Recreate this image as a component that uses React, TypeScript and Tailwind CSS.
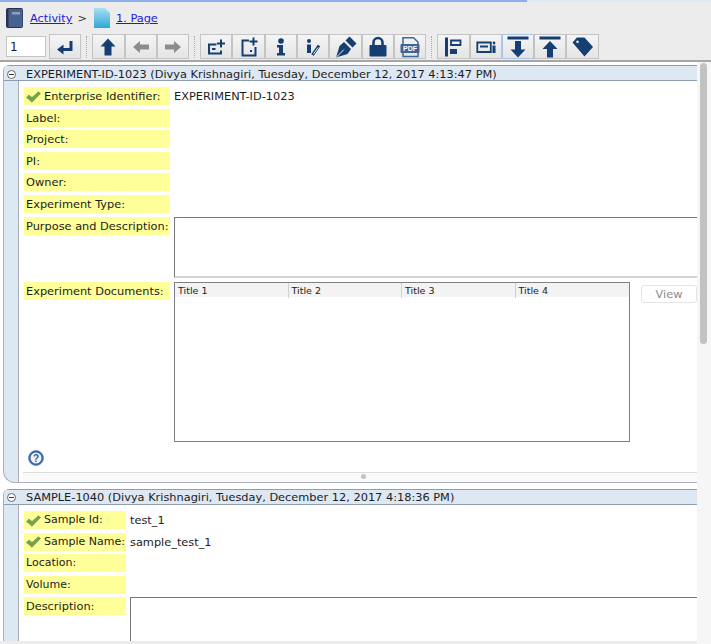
import type { ReactNode } from "react";

const NAVY = "#153f73";
const GREY = "#8c8c8c";

// every icon is drawn 1:1 in a 24px box
const icons: Record<string, ReactNode> = {
  enter: (
    <>
      <path d="M18 6v8.500H9" fill="none" stroke={NAVY} strokeWidth="3" />
      <path d="M10.500 9.500 4 14.500l6.500 5z" fill={NAVY} />
    </>
  ),
  up: <path d="M12 3.500 19.500 11.500H15.500V20.500H8.500V11.500H4.500z" fill={NAVY} />,
  left: <path d="M4 12 11 6v3.500h9v5h-9v3.500z" fill={GREY} />,
  right: <path d="M20 12 13 6v3.500H4v5h9v3.500z" fill={GREY} />,
  addField: (
    <>
      <path d="M12.500 9.500H5v9h12v-3" fill="none" stroke={NAVY} strokeWidth="2" />
      <path d="M8 14h3.500M17 4.500v8M13 8.500h8" fill="none" stroke={NAVY} strokeWidth="2" />
    </>
  ),
  addPage: (
    <>
      <path d="M12 5.500H5.500v15h13V12" fill="none" stroke={NAVY} strokeWidth="2" />
      <path d="M13 15h2v2h-2z" fill={NAVY} />
      <path d="M16.500 2.500v8M12.500 6.500h8" fill="none" stroke={NAVY} strokeWidth="2" />
    </>
  ),
  info: (
    <>
      <circle cx="12" cy="6" r="2.800" fill={NAVY} />
      <path d="M8 10h6v8h2v2.500H8V18h2v-5.500H8z" fill={NAVY} />
    </>
  ),
  sign: (
    <>
      <circle cx="8" cy="6" r="2" fill={NAVY} />
      <path d="M6 9.500h4v8.500H6z" fill={NAVY} />
      <path d="M11.500 20 18 10.500" fill="none" stroke={NAVY} strokeWidth="3" />
      <path d="M12.500 19 17 12.500" fill="none" stroke="#e8e8e8" strokeWidth="1" />
    </>
  ),
  pen: (
    <>
      <path d="M15.500 1.500 22.500 8.500 18.500 12.500 11.500 5.500z" fill={NAVY} />
      <path d="M10 7 17 14 13.500 19 2 22.500 5.500 11z" fill={NAVY} />
      <path d="M2.500 22 10 14.500" stroke="#e8e8e8" strokeWidth="1" />
    </>
  ),
  lock: (
    <>
      <path d="M7.500 11V7.500a4.500 4.500 0 0 1 9 0V11" fill="none" stroke={NAVY} strokeWidth="2.600" />
      <rect x="3.500" y="10" width="17" height="11.500" rx="1" fill={NAVY} />
    </>
  ),
  pdf: (
    <>
      <path d="M5 9V2.700h10.500L20 7v2M5 18v3.500h15V18" fill="none" stroke="#3f6596" strokeWidth="1.500" />
      <rect x="2.500" y="9" width="19" height="9" rx="1" fill="#3f6596" />
      <text x="12" y="16.200" textAnchor="middle" fontSize="7" fontWeight="700" fill="#fff" fontFamily="'Liberation Sans', sans-serif">
        PDF
      </text>
    </>
  ),
  align: (
    <>
      <rect x="4" y="2.500" width="3" height="19" fill={NAVY} />
      <path d="M10 5.500h9.500v4.500H10z" fill="none" stroke={NAVY} strokeWidth="1.800" />
      <rect x="9" y="14" width="7" height="5" fill={NAVY} />
    </>
  ),
  fieldInfo: (
    <>
      <path d="M3.300 7.500h13.500v9.500H3.300z" fill="none" stroke={NAVY} strokeWidth="1.800" />
      <path d="M6 10.500h8v2H6z" fill={NAVY} />
      <circle cx="20" cy="8" r="1.400" fill={NAVY} />
      <path d="M18.500 10.500h3V18h-3z" fill={NAVY} />
    </>
  ),
  down: (
    <>
      <rect x="1.500" y="1.500" width="21" height="3" fill={NAVY} />
      <path d="M12 22.500 4.500 14.500H9V6h6v8.500h4.500z" fill={NAVY} />
    </>
  ),
  top: (
    <>
      <rect x="1.500" y="1.500" width="21" height="3" fill={NAVY} />
      <path d="M12 6 19.500 14H15V22.500H9V14H4.500z" fill={NAVY} />
    </>
  ),
  tag: (
    <path
      fillRule="evenodd"
      d="M1.500 7.500 6 2.500h7.500L22 12 13.500 21.500zM6.500 5.500a1.300 1.300 0 1 0 .01 0z"
      fill={NAVY}
    />
  ),
};

const ToolButton = ({ name, focused }: { name: string; focused?: boolean }) => (
  <button
    className={`w-[32.300px] h-[25px] flex items-center justify-center border bg-gradient-to-b from-[#f5f5f5] to-[#e4e4e4] ${
      focused ? "border-[#a9c4e4]" : "border-[#c4c4c4]"
    }`}
  >
    <svg width="24" height="24" viewBox="0 0 24 24" className="shrink-0">
      {icons[name]}
    </svg>
  </button>
);

const Dots = () => <div className="w-[1px] h-[22px] mx-[5px] border-l border-dotted border-[#a8a8a8]" />;

const Group = ({ children }: { children: ReactNode }) => <div className="flex">{children}</div>;

const Check = () => (
  <svg width="15" height="12" viewBox="0 0 15 12" className="shrink-0">
    <path d="M.5 6.500 3 4 6 6.500 12.500.8 14.500 2.500 6 11.300z" fill="#74a24e" stroke="#5b8740" strokeWidth=".5" />
  </svg>
);

const Field = ({
  label,
  check,
  value,
  width,
}: {
  label: string;
  check?: boolean;
  value?: string;
  width: string;
}) => (
  <div className="flex h-[18px] items-center">
    <div className={`${width} h-full bg-[#ffff99] flex items-center pl-[2px] pt-[1px] shrink-0 whitespace-nowrap`}>
      {check && (
        <span className="mr-[3px] flex">
          <Check />
        </span>
      )}
      {label}
    </div>
    {value && <div className="pl-[4px] pt-[1px]">{value}</div>}
  </div>
);

const PanelHeader = ({ title, offset }: { title: string; offset: string }) => (
  <div className={`h-[16px] flex items-center bg-[#dee8f3] border-y border-[#8f9db0] leading-none shrink-0 ${offset}`}>
    <div className="w-[9px] h-[9px] ml-[3px] mr-[10px] rounded-full border border-[#666] bg-white flex items-center justify-center shrink-0">
      <div className="w-[5px] h-[1px] bg-[#333]" />
    </div>
    <span className="whitespace-nowrap">{title}</span>
  </div>
);

const App = () => {
  return (
    <div className="w-[711px] h-[644px] overflow-hidden bg-[#ececec] flex flex-col text-[11.350px] text-[#1c1c1c] font-['DejaVu_Sans',sans-serif]">
      {/* progress line */}
      <div className="h-[2px] flex shrink-0 bg-[#dfe8f6]">
        <div className="w-[527px] bg-[#8cb0ea]" />
      </div>

      {/* breadcrumb */}
      <div className="h-[26px] mt-[3px] pl-[6px] flex items-center shrink-0">
        <svg width="17" height="20" viewBox="0 0 17 20">
          <rect width="17" height="20" rx="2" fill="#26324f" />
          <rect x="2.500" y="1" width="14" height="18" fill="#47628c" />
          <rect x="6" y="4" width="8" height="2.500" fill="#8fa2bd" />
        </svg>
        <span className="ml-[7px] pt-[1px] text-[#1a1ae0] underline">Activity</span>
        <span className="ml-[5px] pt-[1px] text-[#333]">&gt;</span>
        <svg width="16" height="20" viewBox="0 0 16 20" className="ml-[7px]">
          <defs>
            <linearGradient id="pageFill" x1="0" y1="0" x2="0" y2="1">
              <stop offset="0" stopColor="#a9e0f2" />
              <stop offset="1" stopColor="#2fa6d6" />
            </linearGradient>
          </defs>
          <path d="M0 0h11l5 5v15H0z" fill="url(#pageFill)" />
        </svg>
        <span className="ml-[6px] pt-[1px] text-[#1a1ae0] underline">1. Page</span>
      </div>

      {/* toolbar */}
      <div className="h-[25px] mt-[3px] ml-[6px] flex items-center shrink-0">
        <div className="w-[40px] h-[21px] bg-white border border-[#c4c4c4] flex items-center pl-[3px] mr-[3px] text-[12px]">1</div>
        <ToolButton name="enter" />
        <Dots />
        <Group>
          <ToolButton name="up" />
          <ToolButton name="left" />
          <ToolButton name="right" />
        </Group>
        <Dots />
        <Group>
          <ToolButton name="addField" />
          <ToolButton name="addPage" />
          <ToolButton name="info" />
          <ToolButton name="sign" />
          <ToolButton name="pen" />
          <ToolButton name="lock" />
          <ToolButton name="pdf" />
        </Group>
        <Dots />
        <Group>
          <ToolButton name="align" />
          <ToolButton name="fieldInfo" />
          <ToolButton name="down" focused />
          <ToolButton name="top" />
          <ToolButton name="tag" />
        </Group>
      </div>

      {/* scrolling page */}
      <div className="mt-[1px] flex-1 min-h-0 border-t-2 border-[#a6a6a6] bg-white flex overflow-hidden">
        <div className="w-[697px] pt-[3px] pl-[3px] flex flex-col">
          {/* experiment panel */}
          <section className="h-[418px] bg-[#dee8f3] border-l border-b border-[#a9b0b9] rounded-bl-[12px] rounded-tl-[6px] flex flex-col shrink-0 overflow-hidden">
            <PanelHeader offset="pt-[3px]" title="EXPERIMENT-ID-1023 (Divya Krishnagiri, Tuesday, December 12, 2017 4:13:47 PM)" />
            <div className="flex-1 ml-[14px] bg-white border-l border-[#a9b0b9] pl-[5px] pt-[6px] flex flex-col">
              <div className="flex flex-col gap-[3.600px]">
                <Field width="w-[146px]" label="Enterprise Identifier:" check value="EXPERIMENT-ID-1023" />
                <Field width="w-[146px]" label="Label:" />
                <Field width="w-[146px]" label="Project:" />
                <Field width="w-[146px]" label="PI:" />
                <Field width="w-[146px]" label="Owner:" />
                <Field width="w-[146px]" label="Experiment Type:" />
                <div className="flex h-[61px]">
                  <div className="w-[146px] h-[18px] bg-[#ffff99] flex items-center pl-[2px] pt-[1px] shrink-0 whitespace-nowrap">Purpose and Description:</div>
                  <div className="ml-[4px] flex-1 border-t border-l border-[#777] border-b-2 border-b-[#d2d2d2]" />
                </div>
              </div>
              <div className="flex mt-[4.500px]">
                <div className="w-[146px] h-[18px] bg-[#ffff99] flex items-center pl-[2px] shrink-0 whitespace-nowrap">Experiment Documents:</div>
                <div className="ml-[4px] w-[456px] h-[160px] border border-[#808080]">
                  <div className="h-[14px] bg-[#f3f3f3] grid grid-cols-4 text-[9.500px]">
                    {["Title 1", "Title 2", "Title 3", "Title 4"].map((title) => (
                      <div key={title} className="pl-[3px] pt-[1px] border-r border-[#d0d0d0] last:border-r-0 flex items-center">
                        {title}
                      </div>
                    ))}
                  </div>
                </div>
                <button className="ml-[11px] mt-[3px] w-[56px] h-[18px] bg-white border border-[#e4e4e4] rounded-[3px] text-[#8a8a8a]">View</button>
              </div>
              <div className="mt-[8px] ml-[4px]">
                <svg width="16" height="16" viewBox="0 0 16 16" className="block">
                  <circle cx="8" cy="8" r="7.500" fill="#2e5fa5" stroke="#7f97bd" />
                  <circle cx="8" cy="8" r="5.500" fill="#f0f4fa" />
                  <text x="8" y="11.500" textAnchor="middle" fontSize="10" fontWeight="700" fill="#2e5fa5" fontFamily="'Liberation Sans', sans-serif">
                    ?
                  </text>
                </svg>
              </div>
              <div className="mt-[6px] -ml-[1px] flex-1 border-t border-[#dcdcdc] bg-[#fafafa] flex justify-center pl-[7px]">
                <div className="w-[5px] h-[5px] mt-[1px] rounded-full bg-[#c4c4c4]" />
              </div>
            </div>
          </section>

          {/* sample panel */}
          <section className="mt-[6px] flex-1 min-h-0 bg-[#dee8f3] border-l border-[#a9b0b9] rounded-tl-[6px] flex flex-col overflow-hidden">
            <PanelHeader offset="pt-[1px]" title="SAMPLE-1040 (Divya Krishnagiri, Tuesday, December 12, 2017 4:18:36 PM)" />
            <div className="flex-1 ml-[14px] bg-white border-l border-[#a9b0b9] pl-[5px] pt-[6px]">
              <div className="flex flex-col gap-[3.500px]">
                <Field width="w-[102px] text-[11px]" label="Sample Id:" check value="test_1" />
                <Field width="w-[102px] text-[11px]" label="Sample Name:" check value="sample_test_1" />
                <Field width="w-[102px] text-[11px]" label="Location:" />
                <Field width="w-[102px] text-[11px]" label="Volume:" />
                <div className="flex h-[44px]">
                  <div className="w-[102px] h-[18px] bg-[#ffff99] flex items-center pl-[2px] pt-[1px] shrink-0">Description:</div>
                  <div className="ml-[4px] flex-1 border-t border-l border-[#777]" />
                </div>
              </div>
            </div>
          </section>
          <div className="h-[3px] bg-[#ececec] shrink-0 -ml-[3px]" />
        </div>

        {/* scrollbar */}
        <div className="w-[14px] bg-[#f6f6f6] pl-[3px] pt-[1px] shrink-0">
          <div className="w-[7px] h-[281px] rounded-full bg-[#c2c2c2]" />
        </div>
      </div>
    </div>
  );
};

export default App;
